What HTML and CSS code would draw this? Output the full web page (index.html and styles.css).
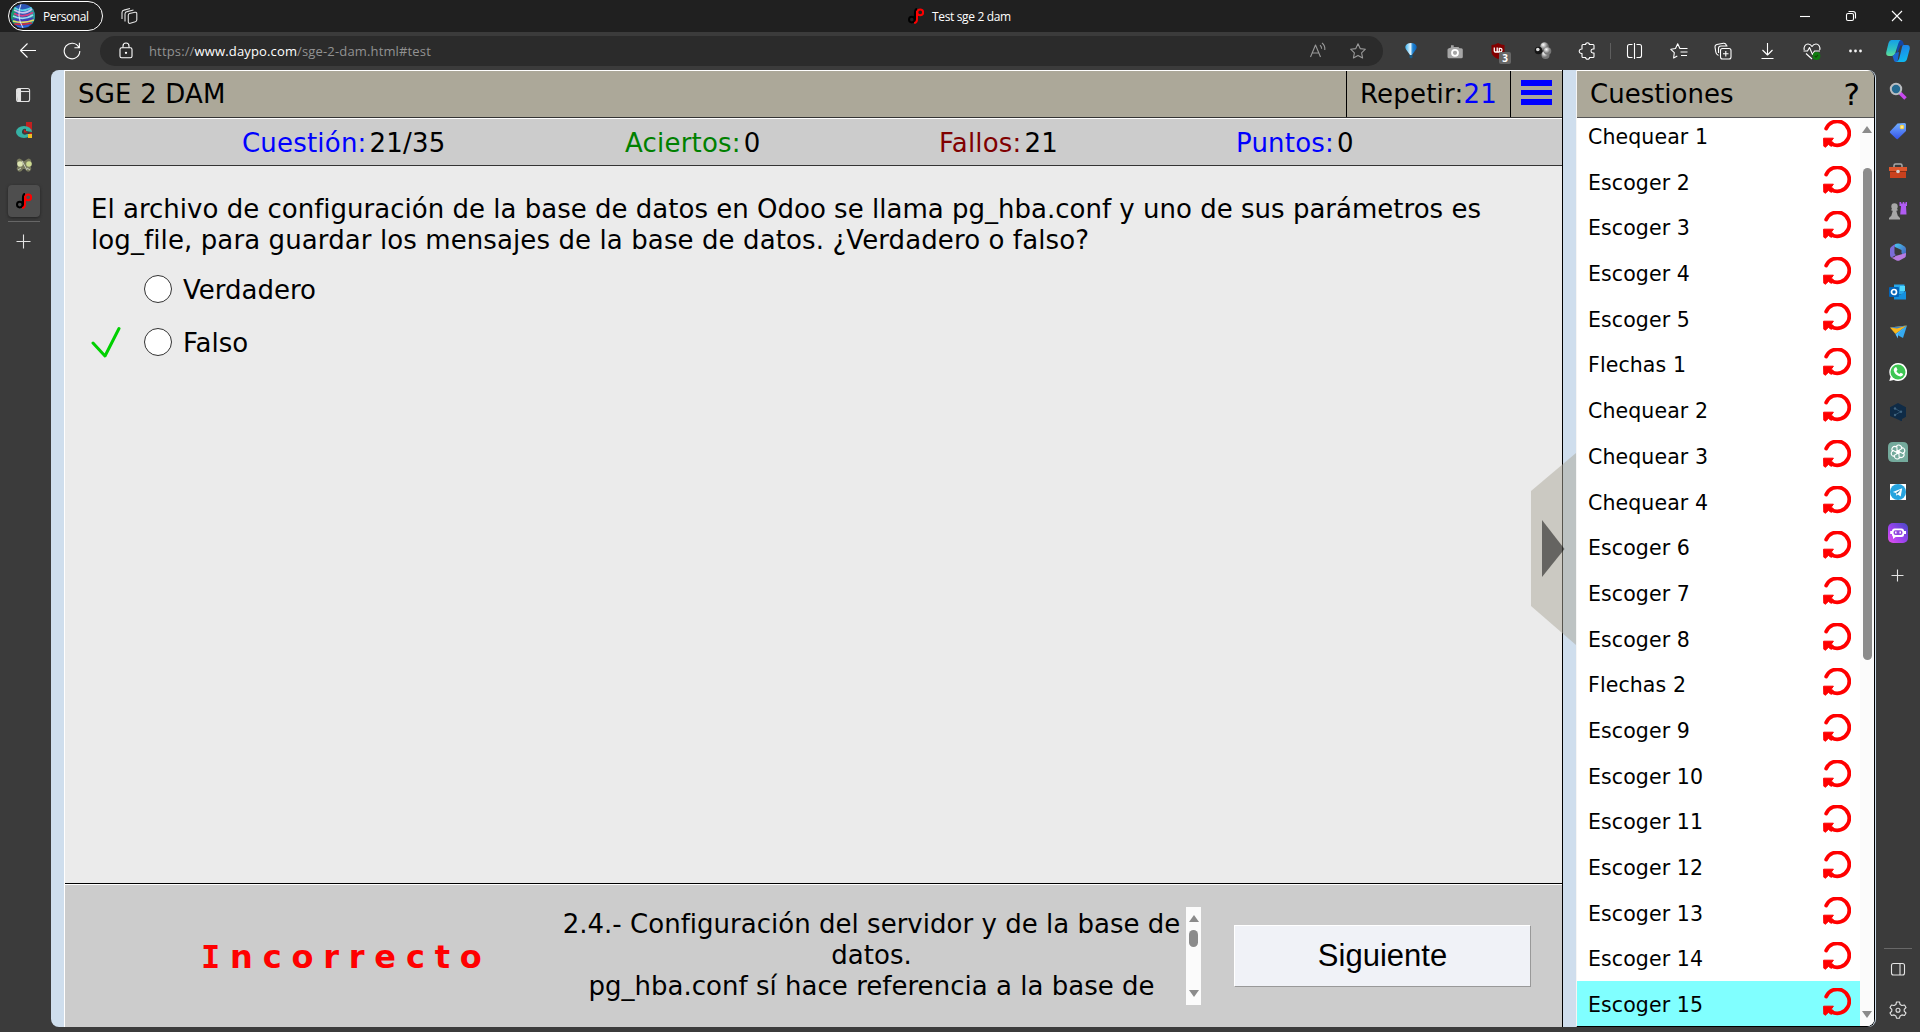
FILE: index.html
```html
<!DOCTYPE html>
<html lang="es">
<head>
<meta charset="utf-8">
<title>Test sge 2 dam</title>
<link rel="stylesheet" href="styles.css">
</head>
<body>
<svg class="defs" aria-hidden="true">
  <symbol id="redo" viewBox="0 0 28 28">
    <path d="M3.2 8.6A12 12 0 1 1 8.5 23.8" fill="none" stroke="#f00" stroke-width="3.8" stroke-linecap="round"/>
    <path d="M.6 18.2 10.4 18.2 8.4 21 11 23.5 8.4 26.4 5.4 24.4 2.4 27.2 .8 26.2Z" fill="#f00" stroke="#f00" stroke-linejoin="round"/>
  </symbol>
  <symbol id="dp" viewBox="0 0 16 16">
    <g fill="none" stroke-width="2"><circle cx="3.8" cy="11.6" r="2.8" stroke="#000"/><path d="M7 15V5.5Q7 1.2 9 1" stroke="#000" stroke-width="2.2"/><circle cx="12.2" cy="4.3" r="2.9" stroke="#f00"/><path d="M9 3v8.5Q9 14.5 6.2 15.2" stroke="#f00" stroke-width="2"/></g>
  </symbol>
</svg>
<header class="titlebar">
  <div class="profile">
    <svg width="24" height="24" viewBox="0 0 24 24"><defs><clipPath id="av"><circle cx="12" cy="12" r="12"/></clipPath></defs><g clip-path="url(#av)"><path fill="#2c55b5" d="M0 0h24v24H0z"/><path fill="#1a9a70" d="M0 2h5v18H0z"/><path fill="#2a9b9b" d="M19 3h5v17h-5z"/><g fill="none" stroke-width="1.7"><path d="M2 3q10 7 21-1" stroke="#5ad4e8"/><path d="M3 6q10 6 18-1" stroke="#c5c4ee"/><path d="M3 9.500q9 5 19-1" stroke="#d33f85"/><path d="M2 12q11 5 20-1" stroke="#9fd9ef"/><path d="M2 15q12 4 20-1" stroke="#4a36b8"/><path d="M2 17q10 3 21-1" stroke="#e4da63"/><path d="M3 20q9 1 18-1" stroke="#d62c3c"/><path d="M6 22.500q6 1 12-1" stroke="#2f66dd"/><path d="M10 0q-5 12 2 24" stroke="#d6e5f8" stroke-width="1"/></g></g></svg>
    <span class="profile-name">Personal</span>
  </div>
  <svg class="tabs-icon line" width="18" height="18" viewBox="0 0 18 18"><path d="M9.500 6.500 15 5.200q1.800-.2 1.800 1.600v6q0 1.500-1.500 2l-5 1.500q-2 .4-2-1.600V8.300q0-1.500 1.200-1.800z"/><path d="M5 14.500V7q0-2 2-2.400L13.500 3M2 12V5.500q0-2 2-2.400L10 1.500"/></svg>
  <div class="tab-title"><svg width="16" height="16"><use href="#dp"/></svg><span>Test sge 2 dam</span></div>
  <div class="window-buttons">
    <svg width="12" height="12" viewBox="0 0 12 12" class="line white"><path d="M1 6.500h10"/></svg>
    <svg width="12" height="12" viewBox="0 0 12 12" class="line white"><rect x="1.500" y="3.500" width="7" height="7" rx="1.500"/><path d="M3.500 1.500H8q2.500 0 2.500 2.500v4.500"/></svg>
    <svg width="12" height="12" viewBox="0 0 12 12" class="line white"><path d="m1 1 10 10M11 1 1 11"/></svg>
  </div>
</header>
<nav class="toolbar">
  <div class="nav-buttons">
    <svg width="18" height="18" viewBox="0 0 18 18" class="line white"><path d="M17 8.500H1.500M8.500 1.500l-7 7 7 7"/></svg>
    <svg width="18" height="18" viewBox="0 0 18 18" class="line white"><path d="M15.800 5.200A7.800 7.800 0 1 0 16.800 9M16.400.8v5h-5"/></svg>
  </div>
  <div class="address">
    <svg width="14" height="18" viewBox="0 0 14 18" class="line white"><rect x="1" y="5.800" width="12" height="10" rx="1.600"/><path d="M4 5.500V4a3 3 0 0 1 6 0v1.500"/><circle cx="7" cy="10.800" r=".6" fill="#fff"/></svg>
    <span class="url">https://<b>www.daypo.com</b>/sge-2-dam.html#test</span>
    <div class="address-tools">
      <svg width="18" height="18" viewBox="0 0 18 18" class="line dim"><path d="M1.500 15 6.500 3l5 12M3.300 11h6.600M11 3.200q1.700 1.300 1.600 3.500M13 1q3.300 2.600 2.800 7"/></svg>
      <svg width="18" height="18" viewBox="0 0 18 18" class="line dim"><path d="m9 1.800 2.200 4.800 5.200.6-3.800 3.600 1 5.200L9 13.400 4.400 16l1-5.200L1.600 7.200l5.200-.6z"/></svg>
    </div>
  </div>
  <div class="tools extensions">
    <svg width="18" height="18" viewBox="0 0 18 18"><defs><linearGradient id="bal"><stop stop-color="#39b0f0"/><stop offset=".45" stop-color="#dff5ff"/><stop offset=".65" stop-color="#1d83d3"/><stop offset="1" stop-color="#0d5fb5"/></linearGradient></defs><path d="M3.200 5Q4 1 9 1t5.800 4q0 2-2.300 4.500L10 13H8L5.500 9.500Q3.200 7 3.200 5z" fill="url(#bal)"/><path d="M7.500 13h3v2.500L9 16.500l-1.500-1z" fill="#175a86"/></svg>
    <svg width="18" height="18" viewBox="0 0 18 18"><path fill="#a6a6a6" d="M5 5.500V3.200h2.700V5h4.800l1 1.200h1.800q1.500 0 1.500 1.500v7q0 1.500-1.500 1.500H3q-1.500 0-1.500-1.500v-7Q1.500 6.200 3 6.200z"/><circle cx="9" cy="10.800" r="3" fill="#a6a6a6" stroke="#fff" stroke-width="1.800"/></svg>
    <div class="shield"><svg width="18" height="18" viewBox="0 0 18 18"><path fill="#820000" d="M8 1q3 2 6.500 2v7q0 4-6.500 7-6.500-3-6.500-7V3Q5 3 8 1z"/><path fill="none" stroke="#fff" stroke-width="1.300" d="M4.300 5.500V9q0 1 1 1h1.900V5.500M9.300 10V6.300h1q1.700 0 1.700 1.800T10.300 10H7"/></svg><span class="badge">3</span></div>
    <svg width="18" height="18" viewBox="0 0 18 18"><defs><radialGradient id="ball" cx=".35" cy=".3"><stop offset="0" stop-color="#fff"/><stop offset="1" stop-color="#777"/></radialGradient></defs><circle cx="10.500" cy="4.500" r="4.200" fill="url(#ball)"/><circle cx="11.500" cy="13" r="4" fill="url(#ball)"/><circle cx="13.500" cy="9" r="3.800" fill="url(#ball)"/><circle cx="4.500" cy="8.500" r="3.800" fill="#151515"/><circle cx="3.800" cy="7.500" r="1.800" fill="#ddd"/></svg>
    <svg width="18" height="18" viewBox="0 0 18 18" class="line white"><path d="M5 2.500h2.700C7.500 1.300 8.500.800 9.500.800s2 .5 1.800 1.700H15q1 0 1 1V7h-1.200c-2.400.3-2.400 3.800 0 4H16v3.500q0 1-1 1h-3.500c.2 1.200-.8 1.700-1.900 1.700s-2.100-.5-1.900-1.700H5q-1 0-1-1v-3C.3 11.800.3 6.800 4 7V3.500q0-1 1-1z"/></svg>
  </div>
  <i class="divider"></i>
  <div class="tools browser-tools">
    <svg width="18" height="18" viewBox="0 0 18 18" class="line white"><path d="M6.500 2.500h-3Q1.500 2.500 1.500 4.500v9q0 2 2 2h3M10.500 2.500h3q2 0 2 2v9q0 2-2 2h-3M8.500 1v16"/></svg>
    <svg width="18" height="18" viewBox="0 0 18 18" class="line white"><path d="M12 6.500H9.900L7.700 1.800 5.500 6.500.8 7.300l3.500 3.400L3.600 16l3.700-2M11 6.500h6.500M10.500 10h7M11 13.500h6"/></svg>
    <svg width="18" height="18" viewBox="0 0 18 18" class="line white"><rect x="6.500" y="6.500" width="10.500" height="10.500" rx="2"/><path d="M9 11.800h5.500M11.800 9v5.500M4.500 13.500Q2 12.500 1.800 10L1 5Q.8 3 2.800 2.500L9.500 1.200Q12 1 12.500 4M4.500 11V6.500Q4.500 4 7 4h6.500"/></svg>
    <svg width="18" height="18" viewBox="0 0 18 18" class="line white"><path d="M8.500 1v12M3.500 8l5 5 5-5M2.500 16.500h12"/></svg>
    <svg width="18" height="18" viewBox="0 0 18 18" class="line white"><path d="M1.200 8C.5 4.500 2.500 2 5 2q2.500 0 4 2.500Q10.500 2 13 2c2.500 0 4.500 2.500 3.800 6M.5 9h4l2-3.500 3 7L11.500 9h5.500M3 11.500l6 5.500"/><circle cx="13.500" cy="14" r="3.900" fill="#107c10" stroke="none"/><path d="m11.800 14 1.200 1.200 2-2.300" stroke="#17420d"/></svg>
    <svg width="18" height="18" viewBox="0 0 18 18" fill="#f4f4f4"><circle cx="3.500" cy="9" r="1.400"/><circle cx="8.500" cy="9" r="1.400"/><circle cx="13.500" cy="9" r="1.400"/></svg>
  </div>
  <svg class="copilot" width="24" height="24" viewBox="0 0 24 24"><defs><linearGradient id="cpa" x2="0" y2="1"><stop stop-color="#159fe8"/><stop offset=".6" stop-color="#2fc3c0"/><stop offset="1" stop-color="#64df95"/></linearGradient><linearGradient id="cpb" x2=".3" y2="1"><stop stop-color="#2278e8"/><stop offset="1" stop-color="#0fb6ee"/></linearGradient></defs><path fill="#1446a6" d="M11 1h3.500q2 0 2.800 2.500L18 6.500h-3.500l-4 10z"/><path fill="url(#cpa)" d="M5.500 1H14.500q-1.500 1-2.200 3.500l-3 9.500Q8.500 17 5.500 17H3q-3.500 0-2.700-4L2.500 4Q3.500 1 5.500 1z"/><path fill="#1b66cf" d="M6.500 16.700Q8.500 16 9.300 14L13 13l-1.500 10H10Q8 23 7.500 20z"/><path fill="url(#cpb)" d="M17.500 6h3.700q3 0 2.500 4l-2.400 9q-.8 4-3.800 4H10q2.500-1 3.200-3.500l2.500-10Q16.200 6 17.500 6z"/></svg>
</nav>
<div class="workspace">
  <aside class="left-rail">
    <svg width="16" height="16" viewBox="0 0 16 16" class="line"><rect x=".6" y="1.500" width="13" height="13" rx="2"/><path d="M.6 4.500h13"/><path d="M1 2.500h3.500V14H2z" fill="#e3e3e3"/></svg>
    <svg width="16" height="16" viewBox="0 0 16 16"><path fill="#c32020" d="M10 0h6v10h-6z"/><ellipse cx="8" cy="10" rx="8" ry="6" fill="#36b2a5"/><path fill="#3b3b3b" d="M6 9q1-3 4-2v2l6 1v2h-5q-3 2-5-1z"/><path fill="#f0bd23" d="M12 12h4v4h-4z"/><path fill="#c32020" d="M8 7.500v3h5.500V12H16v-1.500h-4z"/></svg>
    <svg width="16" height="16" viewBox="0 0 16 16"><path fill="#77795d" d="M1 3q2-3 5 0 2 2 4 0 3-3 5 0 1 3-2 5 4 3 1 6-3 2-5-2H7q-2 4-5 2-3-3 1-6-3-2-2-5z"/><circle cx="4" cy="7" r="2.800" fill="#dde5b3"/><circle cx="13" cy="7" r="2.800" fill="#cedb92"/><path d="m6 4 5 9M2 13l3-2M14 13l-3-2" stroke="#c8cdc0"/></svg>
    <div class="active-tab"><svg width="16" height="16"><use href="#dp"/></svg></div>
    <i class="rail-line"></i>
    <svg width="16" height="16" viewBox="0 0 16 16" class="line"><path d="M7.500.5v14M.5 7.500h14"/></svg>
  </aside>
  <main class="page">
    <section class="test">
      <div class="test-head">
        <h1>SGE 2 DAM</h1>
        <div class="repeat">Repetir:<span class="blue">21</span></div>
        <div class="menu"><i></i><i></i><i></i></div>
      </div>
      <div class="stats">
        <div><span class="blue">Cuestión:</span><span>21/35</span></div>
        <div><span class="green">Aciertos:</span><span>0</span></div>
        <div><span class="maroon">Fallos:</span><span>21</span></div>
        <div><span class="blue">Puntos:</span><span>0</span></div>
      </div>
      <div class="question">
        <p>El archivo de configuración de la base de datos en Odoo se llama pg_hba.conf y uno de sus parámetros es<br><span class="second-line">log_file, para guardar los mensajes de la base de datos. ¿Verdadero o falso?</span></p>
        <div class="option"><span class="mark"></span><i class="radio"></i><span class="answer">Verdadero</span></div>
        <div class="option"><svg class="mark" width="30" height="32" viewBox="0 0 30 32"><path d="M2 17 14 30 28 2.500" fill="none" stroke="#00d000" stroke-width="3" stroke-linecap="round" stroke-linejoin="round"/></svg><i class="radio"></i><span class="answer">Falso</span></div>
      </div>
      <footer class="result">
        <strong class="verdict"><span class="serif-i">I</span>ncorrecto</strong>
        <div class="feedback">
          <p>2.4.- Configuración del servidor y de la base de<br>datos.<br>pg_hba.conf sí hace referencia a la base de</p>
          <div class="scroll small"><i class="up"></i><i class="thumb"></i><i class="down"></i></div>
        </div>
        <button class="next">Siguiente</button>
      </footer>
    </section>
    <svg class="handle" width="46" height="192" viewBox="0 0 46 192"><path d="M45 0 0 38v115l45 39z" fill="#aca899" fill-opacity=".5"/><path d="m11 67 22.500 29L11 124z" fill="#000" fill-opacity=".5"/></svg>
    <aside class="cuestiones">
      <div class="list-head"><h2>Cuestiones</h2><b>?</b></div>
      <div class="list-wrap">
        <ul>
          <li>Chequear 1<svg><use href="#redo"/></svg></li>
          <li>Escoger 2<svg><use href="#redo"/></svg></li>
          <li>Escoger 3<svg><use href="#redo"/></svg></li>
          <li>Escoger 4<svg><use href="#redo"/></svg></li>
          <li>Escoger 5<svg><use href="#redo"/></svg></li>
          <li>Flechas 1<svg><use href="#redo"/></svg></li>
          <li>Chequear 2<svg><use href="#redo"/></svg></li>
          <li>Chequear 3<svg><use href="#redo"/></svg></li>
          <li>Chequear 4<svg><use href="#redo"/></svg></li>
          <li>Escoger 6<svg><use href="#redo"/></svg></li>
          <li>Escoger 7<svg><use href="#redo"/></svg></li>
          <li>Escoger 8<svg><use href="#redo"/></svg></li>
          <li>Flechas 2<svg><use href="#redo"/></svg></li>
          <li>Escoger 9<svg><use href="#redo"/></svg></li>
          <li>Escoger 10<svg><use href="#redo"/></svg></li>
          <li>Escoger 11<svg><use href="#redo"/></svg></li>
          <li>Escoger 12<svg><use href="#redo"/></svg></li>
          <li>Escoger 13<svg><use href="#redo"/></svg></li>
          <li>Escoger 14<svg><use href="#redo"/></svg></li>
          <li class="current">Escoger 15<svg><use href="#redo"/></svg></li>
        </ul>
        <div class="scroll"><i class="up"></i><i class="thumb"></i><i class="down"></i></div>
      </div>
    </aside>
  </main>
  <aside class="right-rail">
    <svg viewBox="0 0 18 18"><path d="m11 11 5.500 5.500" stroke="#c848ef" stroke-width="3.500"/><circle cx="7" cy="7" r="5.200" fill="#246a91" stroke="#b9bcc0" stroke-width="2"/></svg>
    <svg viewBox="0 0 18 18"><defs><linearGradient id="tg" x2="0" y2="1"><stop stop-color="#72b0ff"/><stop offset="1" stop-color="#3553e8"/></linearGradient></defs><path d="M8.500 1.500 15.500 1q1.500 0 1.500 1.500V9L8.800 17Q8 17.500 7.200 16.700L1.200 11q-.8-1 0-1.800z" fill="url(#tg)"/><circle cx="13" cy="5" r="2.300" fill="#f9d447"/><circle cx="13" cy="5" r=".8" fill="#fff"/></svg>
    <svg viewBox="0 0 18 18"><path d="M5 5V3.500Q5 2 6.500 2h5Q13 2 13 3.500V5" fill="none" stroke="#a9a9a9" stroke-width="1.500"/><path fill="#df572d" d="M0 5h18v4H0z"/><path fill="#c9411e" d="M1 9h16v7H1z"/><path fill="#8d2e14" d="M1 9h16v1H1z"/><circle cx="9" cy="9.500" r="1.800" fill="#d3d3d3"/></svg>
    <svg viewBox="0 0 18 18"><path fill="#b05cf2" d="M10.500 0h1.700v1.500h1.500V0h1.600v1.500h1.200V0H18v4h-1l.5 8.500h-6.300L12 4h-1.500z"/><g fill="#a7a7a7"><circle cx="5.500" cy="4.500" r="3.200"/><path d="M2.500 7h6v1.800H7.300l1.500 5L11 16v1.500H0V16l2.300-2.200 1.500-5H2.500z"/></g></svg>
    <svg viewBox="0 0 18 18"><defs><linearGradient id="mg" x2="1" y2="1"><stop stop-color="#45c7ee"/><stop offset="1" stop-color="#4755b8"/></linearGradient></defs><path fill="#7b6cd8" d="M7.500.5Q1 3.500 1 6v6q0 1.500 1.500 2.500L7 12q-1.500-.5-1.500-2V4z"/><path fill="url(#mg)" d="M6 1.500Q9-.5 12 1.300l4 2.500Q17 5 17 6v6q0 2-1.500 2.800l-3-5V7L6 4z"/><path fill="#b87be0" d="M17 10q0 4-1.500 4.800L10.500 17.500q-1.500.6-3 0L2.200 14.400Q5 15 6.500 13z"/></svg>
    <svg viewBox="0 0 18 18"><path fill="#28a8ea" d="M5 1.500h10.500v10H5z"/><path fill="#50d9ff" d="M11 3h5v5h-5z"/><path fill="#1490df" d="M5 8.500 11 12l6-4v8.500H5z"/><rect y="4" width="10" height="10" rx="1" fill="#0364b8"/><circle cx="5" cy="9" r="2.500" fill="none" stroke="#fff" stroke-width="1.700"/></svg>
    <svg viewBox="0 0 18 18"><path fill="#f8b61d" d="m1 4.500 17-2L6.500 11z"/><path fill="#35aaf0" d="M18 2.500 14 15l-7.500-4z"/><path fill="#5bbfff" d="M18 2.500 9 10.500v5l-2.500-4z"/><path fill="#3d83c7" d="m1 4.500 17-2L8 5.500z"/></svg>
    <svg viewBox="0 0 18 18"><path fill="#fff" d="M9 0a9 9 0 1 1-4.200 16.900L.3 18l1.300-4.300A9 9 0 0 1 9 0z"/><circle cx="9" cy="9" r="7.500" fill="#3ec653"/><path fill="#fff" d="M6 4.500 7.200 4l1.300 2.700L7.400 8.200Q8.300 10 10.300 11l1.500-1.300 2.400 1.400q-.5 2.500-2.700 2.400Q6 12.500 4.700 7.500 4.700 5.500 6 4.500z"/></svg>
    <svg viewBox="0 0 18 18"><path fill="#0f2b46" d="m9 0 8 4.300v9.400l-4 2.300v2.500l-4-2L1 13V4.300z"/><path d="m6 5.500 5.500 3.200L6 12" fill="none" stroke="#315572"/><g fill="#416581"><circle cx="6" cy="5.500" r="1.200"/><circle cx="12" cy="8.800" r="1.200"/><circle cx="6" cy="12" r="1.200"/></g></svg>
    <svg class="big" viewBox="0 0 20 20"><path fill="#74aa9c" d="M5 0h10q5 0 5 5v15H5q-5 0-5-5V5q0-5 5-5z"/><g fill="none" stroke="#fff" stroke-width="1.050"><path id="petal" d="M8 5.500q.5-2.800 3-2.500t3 3.500L10.500 8.500v3.800"/><use href="#petal" transform="rotate(60 10 10)"/><use href="#petal" transform="rotate(120 10 10)"/><use href="#petal" transform="rotate(180 10 10)"/><use href="#petal" transform="rotate(240 10 10)"/><use href="#petal" transform="rotate(300 10 10)"/></g></svg>
    <svg viewBox="0 0 18 18"><path fill="#fff" d="M1 1h16v16H1z"/><circle cx="9" cy="9" r="8" fill="#27a4df"/><path fill="#fff" d="m3.800 9 9.400-3.800-1.500 8.300-2.900-2-1.400 1.300-.5-2.800z"/><path d="m7.300 10 3.500-2.500-2.500 3" stroke="#27a4df" stroke-width=".6"/></svg>
    <svg class="big" viewBox="0 0 20 20"><defs><linearGradient id="pg" x1="1" x2="0" y2="1"><stop stop-color="#4549c5"/><stop offset=".55" stop-color="#9c43ef"/><stop offset="1" stop-color="#e750ed"/></linearGradient></defs><rect width="20" height="20" rx="5" fill="url(#pg)"/><rect x="4" y="5.500" width="12" height="8.500" rx="2.500" fill="#fff"/><path fill="#fff" d="M2.200 8h3v3h-3zM15 8h3v3h-3zM5 13h4l-4 3z"/><rect x="5.500" y="7.300" width="9" height="4.800" rx="2" fill="#9246df"/><path d="M7.800 8.500v2M12.200 8.500v2" stroke="#fff" stroke-width="1.500"/></svg>
    <svg class="plus line" viewBox="0 0 18 18"><path d="M8.500 2.500v12M2.500 8.500h12"/></svg>
    <i class="rail-line"></i>
    <svg class="panel line" viewBox="0 0 18 18"><rect x="2.500" y="2.500" width="13" height="11.500" rx="2"/><path d="M11 2.500V14"/></svg>
    <svg class="line" viewBox="0 0 18 18"><path d="M7.500 1h3l.6 2.500 1.800 1L15.500 4 17 6.500 15.200 8.400v1.700L17 12l-1.500 2.500-2.600-.6-1.800 1-.6 2.300h-3l-.6-2.300-1.800-1-2.600.6L1 12l1.800-1.900V8.400L1 6.500 2.500 4l2.600.5 1.800-1z"/><circle cx="9" cy="9.200" r="2"/></svg>
  </aside>
</div>
</body>
</html>
```

FILE: styles.css
```css
* { box-sizing: border-box; }
body {
  margin: 0; width: 1920px; height: 1032px; overflow: hidden;
  display: flex; flex-direction: column;
  background: #3b3b3b; color: #000;
  font-family: Verdana, "DejaVu Sans", sans-serif;
}
svg { display: block; flex: none; }
i { display: block; flex: none; }
.defs { display: none; }
.line { fill: none; stroke: #e3e3e3; stroke-width: 1.1; stroke-linejoin: round; }
.white { stroke: #fff; }
.dim { stroke: #999; }

.titlebar {
  height: 32px; flex: none; background: #202020; color: #fff;
  display: grid; grid-template-columns: 95px 18px 1fr auto; align-items: center;
  column-gap: 17px; padding: 0 17px 0 8px;
  font: 12px "Open Sans", sans-serif;
}
.profile {
  width: 95px; height: 30px; border: 1px solid #fff; border-radius: 15px;
  display: flex; align-items: center; gap: 8px; padding-left: 2px;
}
.profile-name { letter-spacing: -.4px; }
.tab-title { display: flex; gap: 8px; align-items: center; padding-left: 753px; white-space: nowrap; letter-spacing: -.35px; }
.window-buttons { display: flex; gap: 34px; }

.toolbar { height: 38px; flex: none; display: flex; align-items: center; }
.nav-buttons { width: 100px; display: flex; gap: 26px; padding-left: 19px; }
.address {
  width: 1283px; height: 30px; background: #2b2b2b; border-radius: 15px;
  display: flex; align-items: center; padding: 0 16px 0 19px;
}
.url { margin-left: 16px; font: 13px "Open Sans", sans-serif; color: #929292; letter-spacing: .15px; }
.url b { font-weight: 400; color: #fff; }
.address-tools { margin-left: auto; display: flex; gap: 22px; }
.tools { display: flex; gap: 26px; }
.extensions { margin-left: 19px; }
.shield { position: relative; }
.badge {
  position: absolute; left: 9px; top: 10px; width: 12px; height: 12px;
  background: #666; border-radius: 2px; color: #fff;
  font: bold 10px/12px "Open Sans", sans-serif; text-align: center;
}
.divider { width: 1px; height: 16px; background: #5e5e5e; margin: 0 15px 0 14px; }
.browser-tools { gap: 26.2px; }
.copilot { margin-left: 21px; }

.workspace { flex: 1; display: flex; height: 962px; }
.left-rail { width: 51px; padding: 17px 0 0 8px; display: flex; flex-direction: column; }
.left-rail > svg { margin: 0 0 19px 8px; }
.active-tab {
  width: 32px; height: 32px; background: #4e4e4e; border-radius: 4px; margin-top: -7px;
  display: flex; align-items: center; justify-content: center; box-shadow: 0 1px 3px #222;
}
.left-rail .rail-line { width: 32px; height: 1px; background: #666; margin: 4px 0 12px; }

.page {
  width: 1825px; height: 957px; background: #cfdeed; border-radius: 8px; overflow: hidden;
  display: flex; padding-left: 13px; position: relative;
}
.test { width: 1499px; border-left: 1px solid #fff; border-right: 1px solid #000; display: flex; flex-direction: column; flex: none; }
.test-head {
  height: 48px; flex: none; display: flex; border-top: 1px solid #fff; border-bottom: 1px solid #333;
  background: #aca899; font-size: 26px; line-height: 46px;
}
h1, h2 { margin: 0; font-size: 26px; font-weight: 400; }
h1 { flex: 1; padding-left: 13px; letter-spacing: .2px; }
.repeat { width: 164px; border-left: 1px solid #000; padding-left: 13px; letter-spacing: .2px; }
.menu { width: 52px; border-left: 1px solid #000; padding: 9px 0 0 10px; display: flex; flex-direction: column; gap: 4px; }
.menu i { width: 31px; height: 5.6px; background: #00f; }
.blue { color: #00f; }
.green { color: #008000; }
.maroon { color: #800000; }
.stats {
  height: 48px; flex: none; border-top: 1px solid #fff; border-bottom: 1px solid #333; background: #ccc;
  display: grid; grid-template-columns: 383px 314px 297px 1fr; padding-left: 177px;
  font-size: 26px; line-height: 48px; letter-spacing: .2px;
}
.stats div { display: flex; gap: 3px; }
.question { flex: 1; background: #ebebeb; padding: 28px 0 0 26px; font-size: 26px; line-height: 31px; }
.question p { margin: 0; white-space: nowrap; letter-spacing: .012px; }
.question .second-line { letter-spacing: .1px; }
.option { display: flex; align-items: center; height: 53px; }
.question p + .option { margin-top: 6px; }
.mark { width: 30px; margin-right: 23px; }
.radio { width: 28px; height: 28px; border: 1.5px solid #333; border-radius: 50%; background: #fff; margin-right: 11px; }
.answer { padding-top: 3px; }
.result {
  height: 144px; flex: none; border-top: 1px solid #000; box-shadow: inset 0 1px #fff; background: #ccc;
  display: flex; align-items: center; padding-left: 136px;
}
.verdict { width: 360px; color: #f00; font-size: 32px; letter-spacing: 9.8px; line-height: 40px; padding-top: 3px; white-space: nowrap; }
.serif-i { font-family: "DejaVu Sans Mono", monospace; }
.feedback { width: 640px; height: 98px; display: flex; }
.feedback p { flex: 1; margin: 2px 4px 0 0; font-size: 26px; line-height: 31px; text-align: center; white-space: nowrap; letter-spacing: .02px; }
.scroll { width: 14px; background: #fbfbfb; display: flex; flex-direction: column; align-items: center; }
.up, .down { border: 5px solid transparent; width: 0; height: 0; }
.up { border-top: 0; border-bottom: 7px solid #8b8b8b; margin-top: 8px; }
.down { border-bottom: 0; border-top: 7px solid #8b8b8b; margin: auto 0 8px; }
.thumb { width: 9px; height: 492px; border-radius: 5px; background: #8b8b8b; margin-top: 34px; }
.small { width: 15px; }
.small .thumb { height: 17px; margin-top: 8px; }
.next {
  width: 297px; height: 62px; margin-left: 33px; padding: 0; background: #f0f2f7;
  border: 1px solid; border-color: #fff #999 #999 #fff;
  font: 31px "Liberation Sans", Arial, sans-serif; color: #000;
}
.handle { position: absolute; left: 1480px; top: 383px; }

.cuestiones {
  width: 299px; margin-left: 13px; border-left: 1px solid #f5f5f5; border-right: 1px solid #000; border-bottom: 1px solid #000;
  display: flex; flex-direction: column; overflow: hidden; border-radius: 0 8px 8px 0; flex: none;
}
.list-head {
  height: 48px; flex: none; background: #aca899; border-top: 1px solid #fff; border-bottom: 1px solid #555;
  display: flex; justify-content: space-between; padding: 0 14px 0 13px; line-height: 46px;
}
.list-head b { font-weight: 400; font-size: 31px; }
.list-wrap { flex: 1; display: flex; background: #fff; overflow: hidden; }
ul { margin: -5px 0 0; padding: 0; width: 283px; list-style: none; }
li {
  height: 45.7px; display: flex; justify-content: space-between; align-items: flex-start;
  padding: 7px 9px 0 11px; font-size: 20.5px; line-height: 35px; letter-spacing: .1px;
}
li svg { width: 28px; height: 28px; }
li.current { background: #80ffff; }
.list-wrap .scroll { width: 14px; }
.list-wrap .thumb { margin-top: 35px; }

.right-rail { width: 44px; padding: 12px 0 0 13px; display: flex; flex-direction: column; gap: 22.15px; }
.right-rail svg { width: 18px; height: 18px; }
.right-rail svg.big { width: 20px; height: 20px; margin: -1px; }
.right-rail .plus { margin-top: 3px; }
.right-rail .rail-line { width: 28px; height: 1px; background: #686868; margin: auto 0 -10px -5px; }
.right-rail svg:last-child { margin-bottom: 13px; }
```
